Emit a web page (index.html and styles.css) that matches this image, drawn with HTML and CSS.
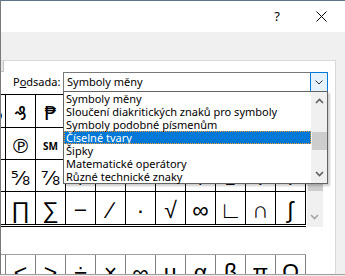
FILE: index.html
```html
<!DOCTYPE html>
<html lang="cs">
<head>
    <meta charset="UTF-8">
    <title>Mapa znaků</title>
    <link rel="stylesheet" href="styles.css">
</head>
<body>
    <div class="window">
        <div class="titlebar">
            <span class="help">?</span>
            <span class="close">
                <svg width="11" height="11" viewBox="0 0 11 11"><path d="M0.5 0.5L10.5 10.5M10.5 0.5L0.5 10.5" stroke="#000" stroke-width="1" fill="none"/></svg>
            </span>
        </div>
        <div class="tabstrip"></div>
        <div class="panel">
            <div class="subset-row">
                <span class="font-edge"></span>
                <label class="subset-label">P<u>o</u>dsada:</label>
                <div class="combo">
                    <span class="combo-value">Symboly měny</span>
                    <span class="combo-button">
                        <svg width="8" height="5" viewBox="0 0 8 5"><path d="M0.5 0.5L4 4L7.5 0.5" stroke="#333" stroke-width="1" fill="none"/></svg>
                    </span>
                    <div class="dropdown">
                        <ul class="dropdown-list">
                            <li>Symboly měny</li>
                            <li>Sloučení diakritických znaků pro symboly</li>
                            <li>Symboly podobné písmenům</li>
                            <li class="selected">Číselné tvary</li>
                            <li>Šipky</li>
                            <li>Matematické operátory</li>
                            <li>Různé technické znaky</li>
                        </ul>
                        <div class="list-scroll">
                            <svg class="arrow-up" width="9" height="6" viewBox="0 0 9 6"><path d="M1 5L4.5 1.5L8 5" stroke="#606060" stroke-width="1.6" fill="none"/></svg>
                            <div class="list-thumb"></div>
                            <svg class="arrow-down" width="9" height="6" viewBox="0 0 9 6"><path d="M1 1L4.5 4.5L8 1" stroke="#606060" stroke-width="1.6" fill="none"/></svg>
                        </div>
                    </div>
                </div>
            </div>

            <div class="chars">
                <div class="chars-clip">
                    <div class="char-grid">
                        <span>₯</span><span>₰</span><span>₱</span><span>₲</span><span>₳</span><span>₴</span><span>₵</span><span>₸</span><span>₹</span><span>₺</span><span>₼</span>
                        <span></span><span>℗</span><span class="sm">SM</span><span>℡</span><span>™</span><span>Ω</span><span>℮</span><span>ℓ</span><span>№</span><span>℞</span><span>℥</span>
                        <span></span><span>⅝</span><span>⅞</span><span>⅟</span><span>←</span><span>→</span><span>↔</span><span>↑</span><span>↨</span><span>↓</span><span>↕</span>
                        <span></span><span class="math">∏</span><span class="math">∑</span><span class="math">−</span><span class="math">∕</span><span class="math">∙</span><span class="math">√</span><span class="math">∞</span><span class="math">∟</span><span class="math">∩</span><span class="math">∫</span>
                    </div>
                </div>
                <div class="vscroll">
                    <div class="vscroll-thumb"></div>
                    <svg class="arrow-down" width="9" height="6" viewBox="0 0 9 6"><path d="M1 1L4.5 4.5L8 1" stroke="#a6a6a6" stroke-width="1.6" fill="none"/></svg>
                </div>
            </div>

            <div class="recent">
                <div class="recent-grid">
                    <span></span><span class="math">&lt;</span><span class="math">&gt;</span><span class="math">÷</span><span class="math">×</span><span class="math">∞</span><span class="math">µ</span><span class="math">α</span><span class="math">β</span><span class="math">π</span><span class="math">Ω</span>
                </div>
            </div>
        </div>
    </div>
</body>
</html>
```

FILE: styles.css
```css
html, body {
    margin: 0;
    padding: 0;
}
body {
    width: 345px;
    height: 276px;
    overflow: hidden;
    background: #f0f0f0;
    font-family: "Noto Sans", sans-serif;
    font-size: 11px;
    color: #000;
}
.window {
    box-sizing: border-box;
    height: 275px;
    border-top: 1px solid #5f738b;
    border-left: 1px solid #7a7a7a;
    border-bottom: 1px solid #a0a0a0;
    overflow: hidden;
}
.titlebar {
    height: 31px;
    background: #ffffff;
    display: flex;
    justify-content: flex-end;
    align-items: center;
}
.help {
    font-size: 13px;
    margin-right: 36px;
    line-height: 1;
}
.close {
    display: flex;
    margin-right: 18px;
}
.tabstrip {
    height: 28px;
    background: #f0f0f0;
}
.panel {
    box-sizing: border-box;
    width: 335px;
    height: 216px;
    background: #ffffff;
    border-top: 1px solid #d9d9d9;
    border-right: 1px solid #d9d9d9;
}
.subset-row {
    height: 33px;
    display: flex;
    align-items: flex-start;
}
.font-edge {
    flex: none;
    box-sizing: border-box;
    width: 3px;
    height: 11px;
    background: #e6e6e6;
    border-right: 1px solid #c4c4c4;
    border-bottom: 1px solid #c4c4c4;
}
.subset-label {
    box-sizing: border-box;
    width: 59px;
    flex: none;
    padding-left: 9px;
    margin-top: 13px;
    line-height: 16px;
    white-space: nowrap;
}
.combo {
    position: relative;
    box-sizing: border-box;
    width: 265px;
    height: 20px;
    margin-top: 11px;
    border: 1px solid #7a7a7a;
    display: flex;
    align-items: center;
}
.combo-value {
    flex: 1;
    padding-left: 3px;
    line-height: 16px;
}
.combo-button {
    box-sizing: border-box;
    width: 18px;
    height: 20px;
    margin: -1px -1px -1px 0;
    border: 1px solid #0078d7;
    background: #e5f1fb;
    display: flex;
    align-items: center;
    justify-content: center;
}
.dropdown {
    position: absolute;
    left: -1px;
    top: 18px;
    width: 265px;
    box-sizing: border-box;
    border: 1px solid #646464;
    background: #ffffff;
    display: flex;
    box-shadow: 2px 2px 2px rgba(0, 0, 0, 0.2);
    z-index: 2;
}
.dropdown-list {
    list-style: none;
    margin: 0;
    padding: 0;
    flex: 1;
}
.dropdown-list li {
    height: 13px;
    line-height: 13px;
    padding-left: 2px;
    white-space: nowrap;
    box-sizing: border-box;
}
.dropdown-list li.selected {
    background: #0078d7;
    color: #ffffff;
    outline: 1px dotted #f39a2e;
    outline-offset: -1px;
}
.list-scroll {
    width: 16px;
    background: #f0f0f0;
    position: relative;
}
.list-scroll .arrow-up {
    position: absolute;
    left: 4px;
    top: 6px;
}
.list-scroll .arrow-down {
    position: absolute;
    left: 4px;
    bottom: 6px;
}
.list-thumb {
    position: absolute;
    left: 1px;
    right: 0;
    top: 40px;
    height: 18px;
    background: #cdcdcd;
}
.chars {
    display: flex;
    height: 133px;
}
.chars-clip {
    width: 305px;
    overflow: hidden;
}
.char-grid {
    margin-left: -25px;
    width: 330px;
    display: grid;
    grid-template-columns: repeat(11, 30px);
    grid-template-rows: 33px 32px 32px 33px;
    border-top: 1px solid #000;
    border-bottom: 1px solid #000;
    padding-bottom: 1px;
}
.char-grid span, .recent-grid span {
    box-sizing: border-box;
    border-right: 1px solid #000;
    border-bottom: 1px solid #000;
    display: flex;
    align-items: center;
    justify-content: center;
    font-family: "DejaVu Sans", sans-serif;
    font-size: 20px;
    padding-top: 4px;
}
.char-grid span.math, .recent-grid span.math {
    font-family: "Liberation Sans", "DejaVu Sans", sans-serif;
    font-size: 23px;
}
.char-grid span.sm {
    font-family: "Noto Sans", sans-serif;
    font-size: 10px;
    font-weight: bold;
}
.vscroll {
    width: 16px;
    margin-left: 1px;
    height: 133px;
    background: #f0f0f0;
    position: relative;
}
.vscroll-thumb {
    position: absolute;
    left: 1px;
    right: 0;
    top: 17px;
    height: 80px;
    background: #cdcdcd;
}
.vscroll .arrow-down {
    position: absolute;
    left: 3px;
    bottom: 7px;
}
.recent {
    margin-top: 27px;
    width: 305px;
    overflow: hidden;
}
.recent-grid {
    margin-left: -25px;
    width: 330px;
    display: grid;
    grid-template-columns: repeat(11, 30px);
    grid-template-rows: 33px;
    border-top: 1px solid #a0a0a0;
}
.recent-grid span {
    border-right-color: #7f7f7f;
    border-bottom: none;
}
```
